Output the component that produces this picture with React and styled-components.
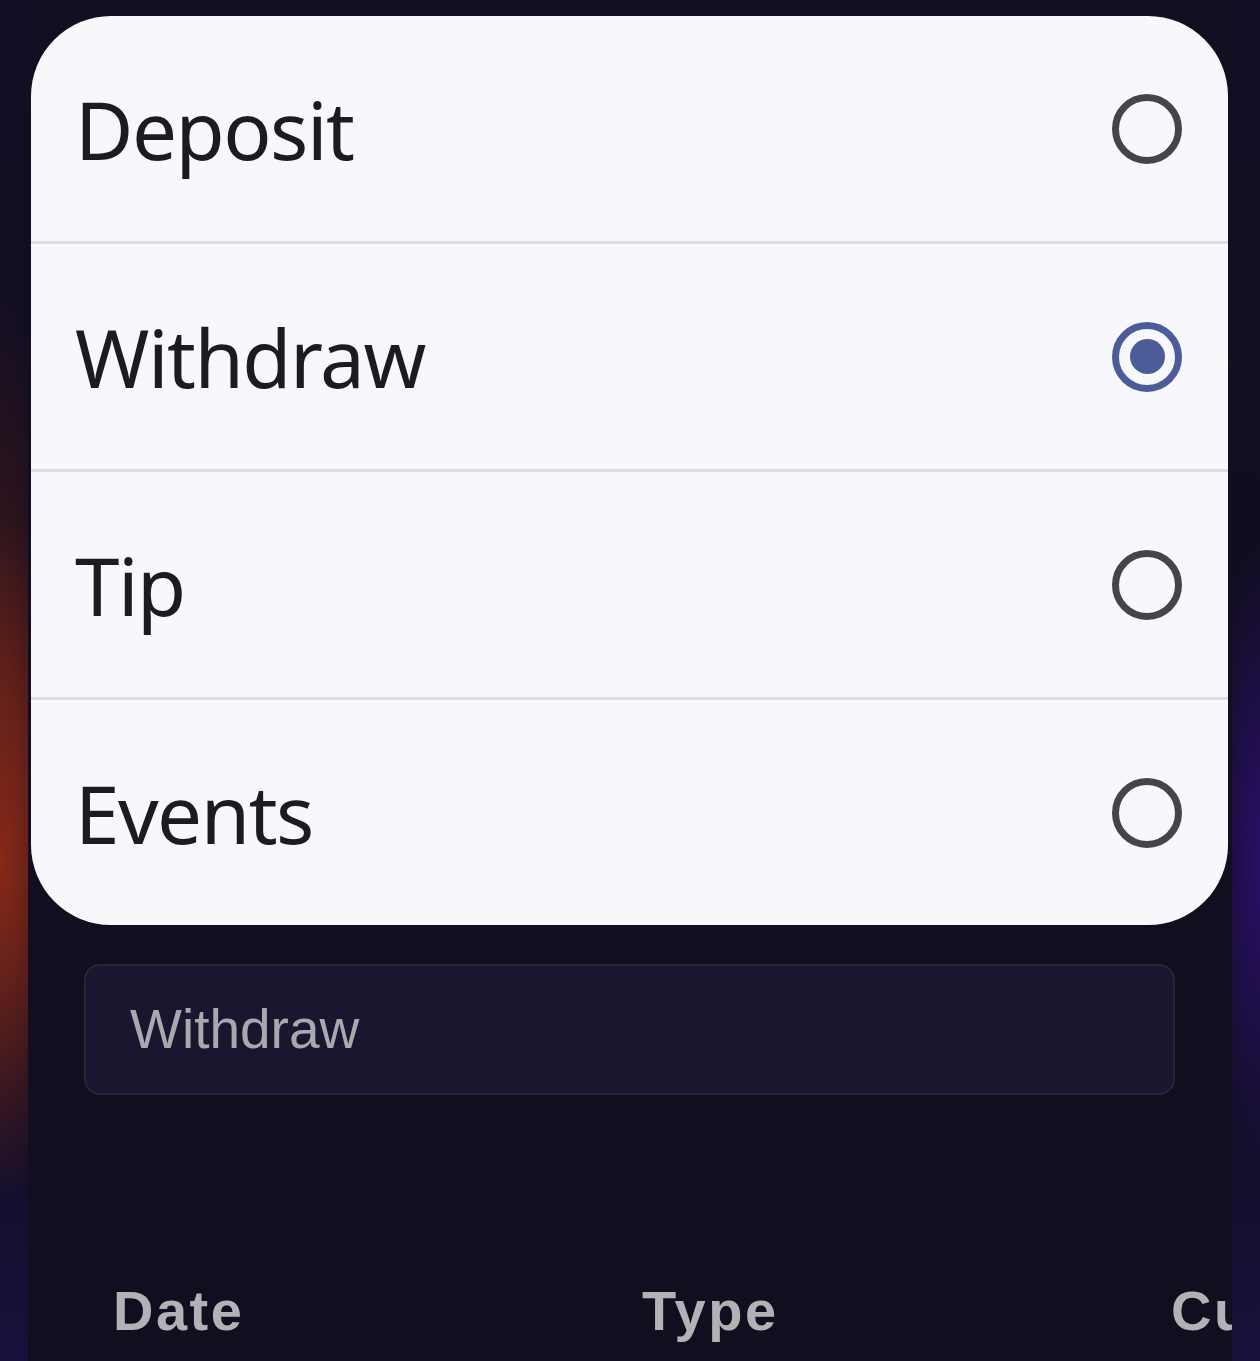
import React from "react";
import styled, { createGlobalStyle } from "styled-components";

const Global = createGlobalStyle`
  html, body { margin: 0; padding: 0; }
  body {
    background: #110e20;
    font-family: "Liberation Sans", Arial, sans-serif;
  }
  * { box-sizing: border-box; }
`;

const Page = styled.div`
  width: 1260px;
  height: 1361px;
  overflow: hidden;
  display: flex;
  justify-content: center;
  background:
    radial-gradient(ellipse 90px 340px at 0px 860px, rgba(140, 42, 22, 0.95), rgba(140, 42, 22, 0) 100%),
    radial-gradient(ellipse 60px 420px at 0px 700px, rgba(90, 30, 24, 0.7), rgba(90, 30, 24, 0) 100%),
    radial-gradient(ellipse 60px 320px at 1262px 860px, rgba(46, 16, 118, 0.85), rgba(46, 16, 118, 0) 100%),
    linear-gradient(180deg, #110f26 0%, #110d1f 45%, #120e24 80%, #18113c 100%);
`;

const Column = styled.div`
  width: 1204px;
  height: 100%;
  background:
    radial-gradient(ellipse 610px 40px at 602px 362px, rgba(200, 80, 40, 0.9), rgba(200, 80, 40, 0) 100%),
    #130e1f;
  overflow: hidden;
  display: flex;
  flex-direction: column;
  padding-top: 16px;
`;

const Menu = styled.div`
  margin: 0 4px 0 3px;
  background: #f8f8fc;
  border-radius: 80px;
  overflow: hidden;
  display: flex;
  flex-direction: column;
`;

const Option = styled.div`
  height: 225px;
  display: flex;
  align-items: center;
  justify-content: space-between;
  padding: 0 46px 0 44px;
  & + & {
    border-top: 3px solid #dddbe1;
    height: 228px;
  }
`;

const OptionLabel = styled.span`
  font-family: "Noto Sans", "Open Sans", sans-serif;
  font-size: 80px;
  font-weight: 400;
  letter-spacing: -1.5px;
  color: #1c1b21;
  line-height: 1.2;
`;

const Radio = styled.span`
  width: 70px;
  height: 70px;
  border-radius: 50%;
  border: 7px solid ${(p) => (p.$checked ? "#4b5c98" : "#45444d")};
  display: flex;
  align-items: center;
  justify-content: center;
  flex-shrink: 0;
`;

const RadioDot = styled.span`
  width: 35px;
  height: 35px;
  border-radius: 50%;
  background: #4b5c98;
`;

const Body = styled.div`
  padding: 39px 57px 0 56px;
  display: flex;
  flex-direction: column;
`;

const Field = styled.div`
  height: 131px;
  border: 2px solid #2a243a;
  border-radius: 16px;
  background: #1c1530;
  display: flex;
  align-items: center;
  padding-left: 44px;
`;

const FieldText = styled.span`
  font-family: "Liberation Sans", Arial, sans-serif;
  font-size: 55px;
  color: #aaa8ae;
  line-height: 1.15;
`;

const TableHead = styled.div`
  margin-top: 185px;
  display: grid;
  grid-template-columns: repeat(3, 529px);
  padding-left: 29px;
  width: max-content;
`;

const HeadCell = styled.span`
  font-family: "Liberation Sans", Arial, sans-serif;
  font-size: 56px;
  font-weight: 700;
  letter-spacing: 2.5px;
  color: #b3b1b6;
  line-height: 62px;
  white-space: nowrap;
`;

const options = [
  { label: "Deposit", checked: false },
  { label: "Withdraw", checked: true },
  { label: "Tip", checked: false },
  { label: "Events", checked: false },
];

export default function App() {
  return (
    <>
      <Global />
      <Page>
        <Column>
          <Menu>
            {options.map((o) => (
              <Option key={o.label}>
                <OptionLabel>{o.label}</OptionLabel>
                <Radio $checked={o.checked}>{o.checked && <RadioDot />}</Radio>
              </Option>
            ))}
          </Menu>
          <Body>
            <Field>
              <FieldText>Withdraw</FieldText>
            </Field>
            <TableHead>
              <HeadCell>Date</HeadCell>
              <HeadCell>Type</HeadCell>
              <HeadCell>Currency</HeadCell>
            </TableHead>
          </Body>
        </Column>
      </Page>
    </>
  );
}
